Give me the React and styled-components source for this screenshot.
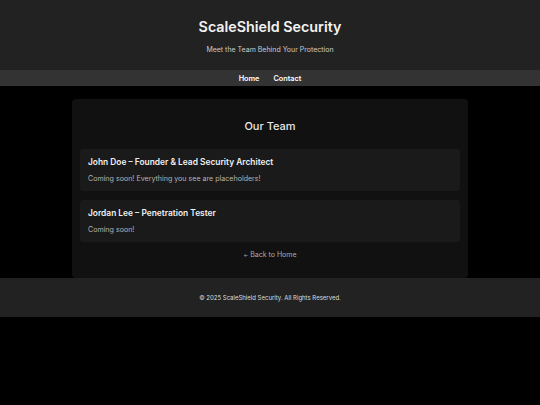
import React from 'react'
import styled, { createGlobalStyle } from 'styled-components'

const GlobalStyle = createGlobalStyle`
  * { box-sizing: border-box; }
  html, body {
    margin: 0;
    padding: 0;
    background: #000;
    font-family: 'Inter', 'Noto Sans', sans-serif;
    color: #eee;
  }
`

const team = [
  { name: 'John Doe – Founder & Lead Security Architect', bio: 'Coming soon! Everything you see are placeholders!' },
  { name: 'Jordan Lee – Penetration Tester', bio: 'Coming soon!' }
]

const App = () => {
  return (
    <>
      <GlobalStyle />
      <Header>
        <h1>ScaleShield Security</h1>
        <p>Meet the Team Behind Your Protection</p>
      </Header>
      <Nav>
        <a href='#home'>Home</a>
        <a href='#contact'>Contact</a>
      </Nav>
      <Main>
        <Card>
          <h2>Our Team</h2>
          <MemberList>
            {team.map(m => (
              <Member key={m.name}>
                <h3>{m.name}</h3>
                <p>{m.bio}</p>
              </Member>
            ))}
          </MemberList>
          <BackLink href='#home'><span>←</span> Back to Home</BackLink>
        </Card>
      </Main>
      <Footer>© 2025 ScaleShield Security. All Rights Reserved.</Footer>
    </>
  )
}

export default App

const Header = styled.header`
  background: #222;
  height: 70px;
  display: flex;
  flex-direction: column;
  align-items: center;
  padding-top: 18px;
  h1 {
    margin: 0;
    font-size: 14.3px;
    font-weight: 600;
    color: #f2f2f2;
    line-height: 18px;
  }
  p {
    margin: 9px 0 0;
    font-size: 7px;
    color: #ccc;
    line-height: 10px;
  }
`

const Nav = styled.nav`
  background: #333;
  height: 16px;
  display: flex;
  justify-content: center;
  align-items: center;
  gap: 14px;
  a {
    color: #fff;
    text-decoration: none;
    font-size: 7.3px;
    font-weight: 600;
  }
`

const Main = styled.main`
  padding-top: 13px;
  display: flex;
  justify-content: center;
`

const Card = styled.section`
  width: 396px;
  background: #111;
  border-radius: 4px;
  padding: 20px 8px 18px;
  display: flex;
  flex-direction: column;
  align-items: stretch;
  h2 {
    margin: 0 0 16px;
    text-align: center;
    font-size: 11px;
    font-weight: 500;
    color: #e6e6e6;
    line-height: 14px;
  }
`

const MemberList = styled.div`
  display: flex;
  flex-direction: column;
  gap: 9px;
`

const Member = styled.div`
  background: #1a1a1a;
  border-radius: 3px;
  height: 42px;
  padding: 8px 8px 0;
  h3 {
    margin: 0;
    font-size: 8.4px;
    font-weight: 600;
    color: #f0f0f0;
    line-height: 10px;
  }
  p {
    margin: 7px 0 0;
    font-size: 7.1px;
    color: #b5b5b5;
    line-height: 10px;
  }
`

const BackLink = styled.a`
  align-self: center;
  margin-top: 8px;
  font-size: 7px;
  color: #aaa;
  text-decoration: none;
  line-height: 10px;
  span {
    font-size: 5px;
  }
`

const Footer = styled.footer`
  background: #222;
  height: 39px;
  display: flex;
  justify-content: center;
  align-items: center;
  font-size: 6px;
  color: #ddd;
`
